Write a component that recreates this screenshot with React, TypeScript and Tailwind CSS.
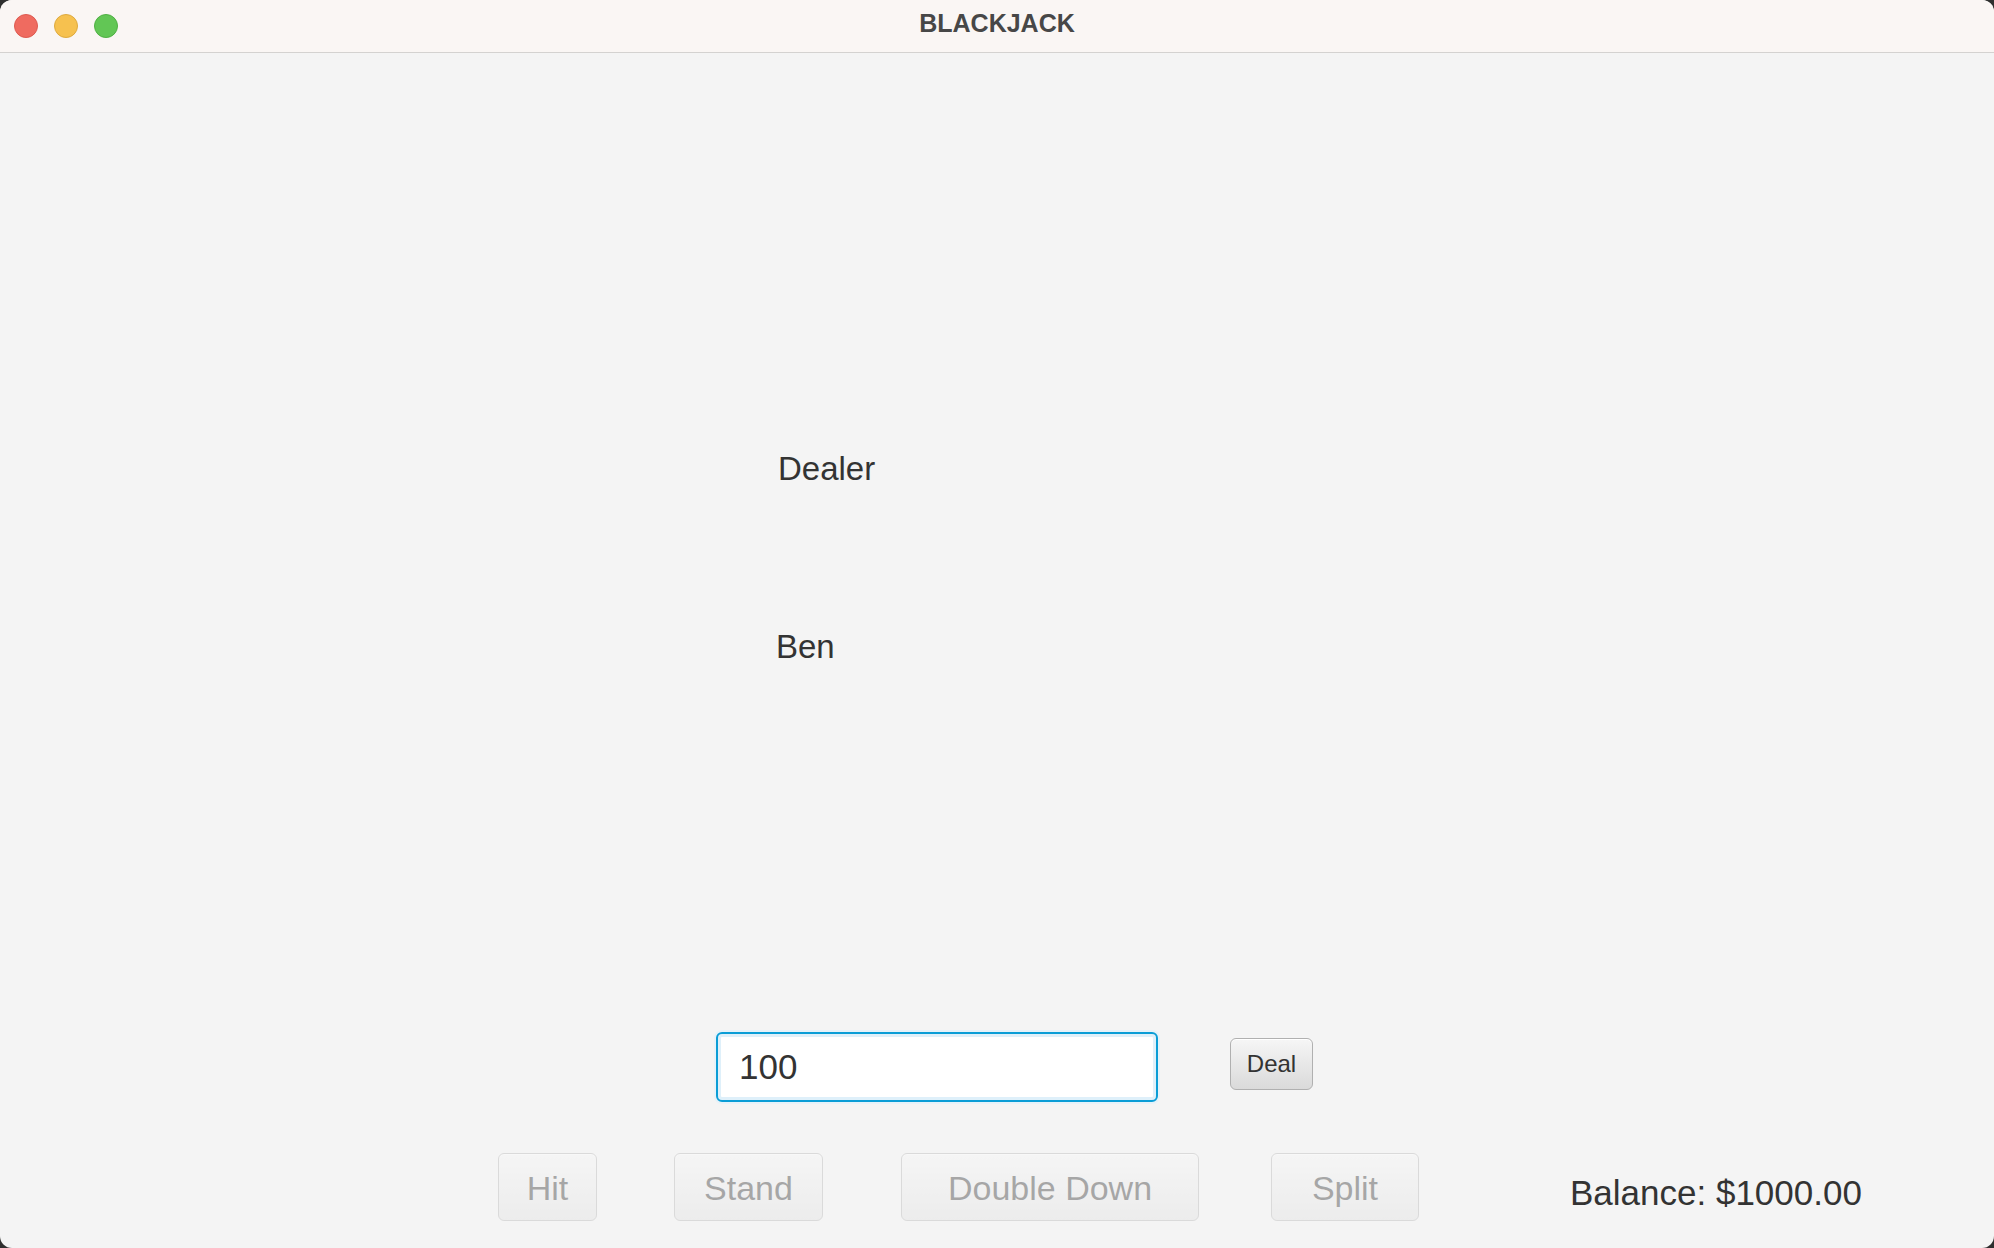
import React from "react";

const ActionButton = ({ label, width }: { label: string; width: string }) => {
  return (
    <button
      disabled
      className={`flex h-[68px] ${width} shrink-0 items-center justify-center rounded-[6px] border border-[#b5b5b5] bg-linear-to-b from-[#f8f8f8] to-[#e2e2e2] pt-[2px] text-[34px] leading-none text-[#333333] opacity-40 shadow-[inset_0_1px_0_#ffffff]`}
    >
      {label}
    </button>
  );
};

const App = () => {
  return (
    <div className="h-[1248px] w-[1994px] bg-[#2f2f2f]">
      <div className="flex h-full flex-col overflow-hidden rounded-[12px] bg-[#f4f4f4] font-['Liberation_Sans',Arial,sans-serif] text-[#333333]">
        <header className="grid h-[53px] shrink-0 grid-cols-[1fr_auto_1fr] items-center border-b border-[#d4d2d0] bg-[#faf6f4]">
          <div className="flex gap-[16px] pl-[14px]">
            <span className="size-[24px] rounded-full border border-[#de5a50] bg-[#ef6b60]" />
            <span className="size-[24px] rounded-full border border-[#deaa3e] bg-[#f6c14f]" />
            <span className="size-[24px] rounded-full border border-[#4fb043] bg-[#62c655]" />
          </div>
          <h1 className="pb-[4px] text-[25px] font-bold text-[#474747]">BLACKJACK</h1>
          <div />
        </header>

        <main className="flex flex-1 flex-col">
          <div className="mt-[399px] pl-[778px] text-[33px] leading-none">Dealer</div>
          <div className="mt-[145px] pl-[776px] text-[33px] leading-none">Ben</div>

          <div className="mt-[369px] flex items-start pl-[716px]">
            <input
              defaultValue="100"
              className="h-[70px] w-[442px] rounded-[6px] border-2 border-[#0a9dd6] bg-white pl-[21px] text-[35px] text-[#333333] shadow-[inset_0_0_0_3px_#dff0fa,0_0_0_2px_#e6f2f9] outline-none"
            />
            <button className="mt-[6px] ml-[72px] flex h-[52px] w-[83px] items-center justify-center rounded-[6px] border border-[#b0b0b0] bg-linear-to-b from-[#f6f6f6] to-[#dadada] text-[24px] leading-none text-[#333333] shadow-[inset_0_1px_0_#ffffff]">
              Deal
            </button>
          </div>

          <div className="mt-[51px] flex items-start pl-[498px]">
            <ActionButton label="Hit" width="w-[99px]" />
            <div className="ml-[77px]">
              <ActionButton label="Stand" width="w-[149px]" />
            </div>
            <div className="ml-[78px]">
              <ActionButton label="Double Down" width="w-[298px]" />
            </div>
            <div className="ml-[72px]">
              <ActionButton label="Split" width="w-[148px]" />
            </div>
            <div className="mt-[22px] ml-[151px] text-[35px] leading-none whitespace-nowrap">
              Balance: $1000.00
            </div>
          </div>
        </main>
      </div>
    </div>
  );
};

export default App;
